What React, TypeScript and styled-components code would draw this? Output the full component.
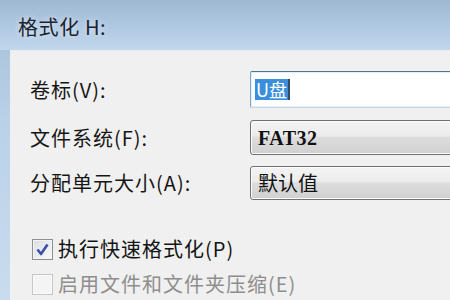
import styled, { createGlobalStyle } from 'styled-components'

const GlobalStyle = createGlobalStyle`
  html, body {
    margin: 0;
    padding: 0;
    width: 450px;
    height: 300px;
    overflow: hidden;
  }
  body {
    font-family: "Noto Sans CJK SC", "Noto Sans", sans-serif;
  }
`

const Window = styled.div`
  width: 450px;
  height: 300px;
  display: flex;
  flex-direction: column;
  overflow: hidden;
  background: linear-gradient(180deg, #a3bdd6 0%, #bad1e8 40%, #c9dcef 100%);
`

const TitleBar = styled.div`
  height: 50px;
  flex-shrink: 0;
  display: flex;
  align-items: center;
  padding: 2px 0 0 18px;
  box-sizing: border-box;
  background: linear-gradient(180deg, #9fb9d3 0%, #b0c9e2 55%, #c2d7ec 100%);
  font-size: 20px;
  letter-spacing: 0.6px;
  color: #1b2330;
  text-shadow: 0 0 6px rgba(255, 255, 255, 0.7);
`

const Body = styled.div`
  flex: 1;
  margin-left: 10px;
  background: #f0f0f0;
  border-top: 1px solid #e6ecf2;
  padding: 20px 0 0 20px;
  display: flex;
  flex-direction: column;
  overflow: hidden;
`

const FieldRow = styled.div<{ $gap: number }>`
  display: grid;
  grid-template-columns: 220px 1fr;
  align-items: center;
  margin-bottom: ${(p) => p.$gap}px;
`

const Label = styled.span`
  font-size: 20px;
  line-height: 24px;
  color: #161616;
  letter-spacing: 1px;
`

const TextBox = styled.div`
  height: 37px;
  box-sizing: border-box;
  margin-right: -20px;
  border: 1px solid #7fa6c6;
  border-top-color: #4f7595;
  border-bottom-color: #c2d8e6;
  border-radius: 2px;
  background: #fff;
  box-shadow: inset 0 0 0 1px #e4eef6;
  display: flex;
  align-items: center;
  padding-left: 4px;
`

const Selection = styled.span`
  background: #3b8ede;
  color: #fff;
  font-size: 18px;
  line-height: 21px;
  padding: 0 1px;
  border-right: 2px solid #2c4a6a;
`

const Combo = styled.div<{ $height: number }>`
  height: ${(p) => p.$height}px;
  box-sizing: border-box;
  margin-right: -20px;
  border: 1px solid #707070;
  border-radius: 3px;
  background: linear-gradient(180deg, #f3f3f3 0%, #ececec 45%, #dddddd 50%, #d0d0d0 100%);
  box-shadow: inset 0 0 0 1px #fcfcfc;
  display: flex;
  align-items: center;
  padding-left: 7px;
  color: #111;
`

const ComboText = styled.span`
  font-size: 20px;
  line-height: 24px;
`

const SerifText = styled.span`
  font-family: "Liberation Serif", "DejaVu Serif", serif;
  font-size: 20px;
  line-height: 24px;
  font-weight: 700;
  letter-spacing: 0.5px;
`

const Options = styled.div`
  display: flex;
  flex-direction: column;
  margin-top: 38px;
  gap: 13px;
`

const CheckRow = styled.label<{ $disabled?: boolean }>`
  display: flex;
  align-items: center;
  gap: 5px;
  font-size: 20px;
  line-height: 22px;
  letter-spacing: 1px;
  color: ${(p) => (p.$disabled ? '#8e8e8e' : '#141414')};
  margin-left: 2px;
`

const Box = styled.span<{ $disabled?: boolean }>`
  width: 21px;
  height: 21px;
  box-sizing: border-box;
  border: 1px solid ${(p) => (p.$disabled ? '#c6c6c6' : '#8f8f8f')};
  background: ${(p) =>
    p.$disabled
      ? '#f4f4f4'
      : 'linear-gradient(135deg, #d9dde3 0%, #eef0f3 60%, #f8f8f8 100%)'};
  box-shadow: inset 0 0 0 1px ${(p) => (p.$disabled ? '#fafafa' : '#f4f4f4')};
  display: flex;
  align-items: center;
  justify-content: center;
  flex-shrink: 0;
`

function Check() {
  return (
    <svg width="15" height="15" viewBox="0 0 15 15">
      <path
        d="M2.5 7.5 L6 12 L12.5 2.5"
        fill="none"
        stroke="#3a52a6"
        strokeWidth="2.6"
        strokeLinejoin="round"
      />
    </svg>
  )
}

export default function App() {
  return (
    <>
      <GlobalStyle />
      <Window>
        <TitleBar>格式化 H:</TitleBar>
        <Body>
          <FieldRow $gap={12}>
            <Label>卷标(V):</Label>
            <TextBox>
              <Selection>U盘</Selection>
            </TextBox>
          </FieldRow>
          <FieldRow $gap={11}>
            <Label>文件系统(F):</Label>
            <Combo $height={35}>
              <SerifText>FAT32</SerifText>
            </Combo>
          </FieldRow>
          <FieldRow $gap={0}>
            <Label>分配单元大小(A):</Label>
            <Combo $height={34}>
              <ComboText>默认值</ComboText>
            </Combo>
          </FieldRow>
          <Options>
            <CheckRow>
              <Box>
                <Check />
              </Box>
              执行快速格式化(P)
            </CheckRow>
            <CheckRow $disabled>
              <Box $disabled />
              启用文件和文件夹压缩(E)
            </CheckRow>
          </Options>
        </Body>
      </Window>
    </>
  )
}
